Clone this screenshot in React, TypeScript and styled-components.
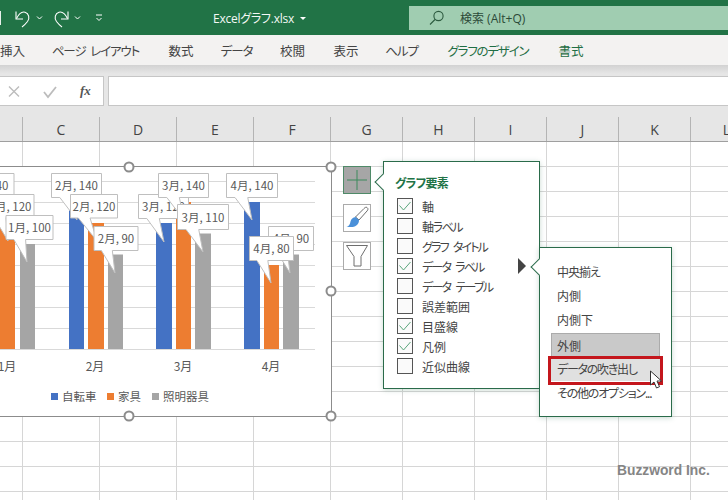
import React from "react";
import styled, { createGlobalStyle } from "styled-components";

const JP = `"Noto Sans CJK JP", sans-serif`;
const GREEN = "#217346";

const Global = createGlobalStyle`
  html, body { margin: 0; padding: 0; background: #fff; }
  body { width: 728px; height: 500px; overflow: hidden; font-family: ${JP}; font-feature-settings: "palt"; }
  #root { width: 728px; height: 500px; }
`;

const Page = styled.div`
  width: 728px; height: 500px; display: flex; flex-direction: column; overflow: hidden; background: #fff;
`;
const TitleBar = styled.header`
  height: 35px; flex: none; background: ${GREEN}; display: flex; align-items: center; position: relative; color: #fff;
`;
const QuickIcons = styled.svg`
  width: 110px; height: 35px; flex: none;
`;
const FileName = styled.div`
  margin-left: 103px; width: 196px; flex: none; display: flex; align-items: center; gap: 6px; font-size: 12px; letter-spacing: -0.25px;
  font-family: "Open Sans", ${JP}; color: #f4f8f5;
`;
const Caret = styled.span`
  width: 0; height: 0; border-left: 3px solid transparent; border-right: 3px solid transparent; border-top: 3px solid #fff; margin-top: 2px;
`;
const SearchBox = styled.div`
  width: 319px; height: 24px; flex: none; box-sizing: border-box; background: #a0cdb1; display: flex; align-items: center; padding-left: 20px; gap: 15px;
  font-size: 12px; font-family: "Open Sans", ${JP}; color: #2c4a38;
`;
const TabBar = styled.nav`
  height: 30px; flex: none; background: #f3f2f1; display: flex; align-items: center;
`;
const Tab = styled.div<{ $w: number; $track: number; $accent?: boolean }>`
  width: ${(p) => p.$w}px; flex: none; text-align: center; font-size: 12.5px; white-space: nowrap;
  letter-spacing: ${(p) => p.$track}px; word-spacing: 3px;
  color: ${(p) => (p.$accent ? "#1f6e44" : "#444")};
`;
const RibbonShadow = styled.div`
  height: 11px; flex: none; background: linear-gradient(#d2d2d2, #e6e6e6 80%);
`;
const FormulaBar = styled.div`
  height: 30px; flex: none; background: #e6e6e6; display: flex; gap: 4px;
`;
const FormulaButtons = styled.div`
  width: 104px; flex: none; box-sizing: border-box; background: #fff; border: 1px solid #c6c6c6; border-left: 0; position: relative;
`;
const FormulaIcons = styled.svg`
  width: 103px; height: 28px; display: block;
`;
const FxText = styled.span`
  position: absolute; left: 80px; top: 6px; font: italic 700 13px "Liberation Serif", serif; color: #555;
`;
const FormulaInput = styled.div`
  flex: 1; background: #fff; border: 1px solid #c6c6c6; border-right: 0;
`;
const HeaderGap = styled.div`
  height: 11px; flex: none; background: #e6e6e6;
`;
const ColumnHeader = styled.div`
  height: 24px; flex: none; background: #e6e6e6; display: flex; border-bottom: 1px solid #9f9f9f; box-sizing: content-box;
`;
const ColumnLabel = styled.div<{ $w: number }>`
  width: ${(p) => p.$w}px; flex: none; box-sizing: border-box; border-right: 1px solid #b4b4b4;
  display: flex; align-items: center; justify-content: center;
  font: 14px "Open Sans", sans-serif; color: #444;
`;
const Sheet = styled.main`
  flex: 1; position: relative; display: flex;
  background-image: linear-gradient(transparent 24px, #d6d6d6 24px);
  background-size: 100% 25px;
`;
const SheetColumn = styled.div<{ $w: number }>`
  width: ${(p) => p.$w}px; flex: none; box-sizing: border-box; border-right: 1px solid #d6d6d6;
`;
const ChartFrame = styled.div`
  position: absolute; left: -21.5px; top: 24px; width: 351px; height: 249px; box-sizing: content-box;
  background: #fff; border: 1.5px solid #8c8c8c;
`;
const ChartSvg = styled.svg`
  display: block; width: 351px; height: 249px;
`;
const CalloutLabel = styled.text`
  font-size: 11.5px; fill: #595959; font-family: ${JP}; font-feature-settings: "palt";
`;
const AxisLabel = styled.text`
  font-size: 12px; fill: #595959; font-family: ${JP}; font-feature-settings: "palt";
`;
const LegendLabel = styled.text`
  font-size: 11.5px; fill: #595959; font-family: ${JP};
`;
const Handle = styled.span<{ $x: number; $y: number }>`
  position: absolute; left: ${(p) => p.$x}px; top: ${(p) => p.$y}px; width: 11px; height: 11px; box-sizing: border-box;
  border-radius: 50%; background: #fff; border: 2px solid #8c8c8c; transform: translate(-50%, -50%);
`;
const ToolButton = styled.button<{ $y: number; $active?: boolean }>`
  position: absolute; left: 343px; top: ${(p) => p.$y}px; width: 28px; height: 28px; padding: 0; box-sizing: border-box;
  display: flex; align-items: center; justify-content: center;
  background: ${(p) => (p.$active ? "#a6a6a6" : "#fff")};
  border: 1px solid ${(p) => (p.$active ? "#4f8a68" : "#ababab")};
`;
const Panel = styled.section`
  position: absolute; box-sizing: border-box; background: #fff; border: 1px solid #2a6b4a;
  box-shadow: 0 1px 5px rgba(60, 120, 90, 0.28);
  &::before {
    content: ""; position: absolute; width: 12px; height: 12px; box-sizing: border-box; background: #fff;
    border-left: 1px solid #2a6b4a; border-bottom: 1px solid #2a6b4a; transform: rotate(45deg);
  }
`;
const ElementsPanel = styled(Panel)`
  left: 383px; top: 19px; width: 157px; height: 228px; padding: 11px 0 0 11px;
  &::before { left: -7px; top: 14px; }
`;
const PanelTitle = styled.h3`
  margin: 0 0 3px; height: 20px; line-height: 20px; font-size: 12px; font-weight: 700; color: ${GREEN}; letter-spacing: -0.8px;
`;
const CheckRow = styled.label<{ $track: number }>`
  display: flex; align-items: center; height: 20px; gap: 9px; padding-left: 2px; font-size: 12px; color: #444;
  letter-spacing: ${(p) => p.$track}px; word-spacing: 4px;
`;
const CheckBox = styled.span`
  width: 16px; height: 16px; flex: none; box-sizing: border-box; border: 1px solid #555; background: #fafafa;
  display: flex; align-items: center; justify-content: center;
`;
const SubArrow = styled.span`
  position: absolute; left: 518px; top: 116px; width: 0; height: 0;
  border-top: 8px solid transparent; border-bottom: 8px solid transparent; border-left: 8px solid #444;
`;
const OptionsPanel = styled(Panel)`
  left: 539px; top: 105px; width: 133px; height: 170px; padding: 12px 0 0 11px;
  &::before { left: -7px; top: 13px; }
`;
const OptionRow = styled.div<{ $state?: "selected" | "hover"; $track?: number }>`
  position: relative; width: 109px; height: 24.2px; box-sizing: border-box; padding-left: 6px; font-size: 12px; line-height: 24px; color: #444; white-space: nowrap;
  letter-spacing: ${(p) => p.$track ?? 0}px;
  background: ${(p) => (p.$state === "selected" ? "#c9c9c9" : p.$state === "hover" ? "#e0e0e0" : "transparent")};
  ${(p) => p.$state === "selected" && "border: 1px solid #ababab; border-bottom: 0; padding-left: 5px; line-height: 24px;"}
  ${(p) =>
    p.$state === "hover" &&
    `&::after { content: ""; position: absolute; left: -3px; right: -3px; top: -1px; bottom: -4px; border: 3px solid #c4161c; }`}
`;
const Cursor = styled.svg`
  position: absolute; left: 649px; top: 228px; width: 15px; height: 20px;
`;
const Watermark = styled.div`
  position: absolute; left: 617px; top: 321px; font: 700 13.8px "Liberation Sans", sans-serif; color: #858585;
`;

const columns: [string, number][] = [
  ["", 23], ["C", 77], ["D", 77], ["E", 77], ["F", 77], ["G", 72], ["H", 72], ["I", 72], ["J", 72], ["K", 72], ["L", 72],
];
// label, cell width, letter spacing, accent
const tabs: [string, number, number, boolean?][] = [
  ["挿入", 24, 0], ["ページ レイアウト", 143, -1.1], ["数式", 28, 0], ["データ", 83, -1], ["校閲", 29, 0], ["表示", 78, 0],
  ["ヘルプ", 33, -1], ["グラフのデザイン", 140, -1.2, true], ["書式", 26, 0, true],
];
const checks: [string, boolean, number][] = [
  ["軸", true, 0], ["軸ラベル", false, -1.4], ["グラフ タイトル", false, -1.8], ["データ ラベル", true, -1.8], ["データ テーブル", false, -1.7],
  ["誤差範囲", false, 0], ["目盛線", true, 0], ["凡例", true, 0], ["近似曲線", false, 0],
];
const BLUE = "#4472c4", ORANGE = "#ed7d31", GRAY = "#a5a5a5";
const bars: [number, number, number, string][] = [
  [-1, 15, 120, ORANGE], [20, 35, 100, GRAY],
  [69, 84, 140, BLUE], [88, 104, 120, ORANGE], [108, 123, 90, GRAY],
  [156, 172, 120, BLUE], [176, 191, 140, ORANGE], [195, 211, 110, GRAY],
  [244, 260, 140, BLUE], [264, 279, 80, ORANGE], [283, 299, 90, GRAY],
];
// text, x, y, w, h, tip x, tip y
const callouts: [string, number, number, number, number, number, number][] = [
  ["1月, 140", -40, 173.5, 54, 24, -14, 220],
  ["1月, 120", -14, 194.5, 48, 23, 8, 241],
  ["1月, 100", 6, 215.5, 47, 24, 27, 262],
  ["2月, 140", 51.5, 173.5, 50, 24, 77, 220],
  ["2月, 120", 70.5, 194.5, 47, 23.5, 97, 241],
  ["2月, 90", 94, 226.5, 44, 24, 115, 273],
  ["3月, 120", 138.5, 194.5, 50, 24, 164, 242],
  ["3月, 140", 158.5, 173.5, 50, 24, 184, 220],
  ["3月, 110", 177.5, 204.5, 51, 25, 203, 252],
  ["4月, 140", 226.5, 173.5, 51, 24, 252, 220],
  ["4月, 90", 268.5, 226.5, 45, 24, 290, 273],
  ["4月, 80", 249.5, 236.5, 44, 24, 271, 283],
];
const legend: [number, string, number, string][] = [
  [51, BLUE, 62, "自転車"], [107, ORANGE, 118, "家具"], [152, GRAY, 163, "照明器具"],
];

function Callout({ c }: { c: (typeof callouts)[number] }) {
  const [t, x, y, w, h, tx, ty] = c;
  const b = y + h;
  return (
    <g>
      <path
        d={`M${x} ${y}H${x + w}V${b}H${x + (w * 5) / 12}L${tx} ${ty}L${x + w / 6} ${b}H${x}Z`}
        fill="#fff"
        stroke="#bfbfbf"
      />
      <CalloutLabel x={x + w / 2} y={y + h / 2 + 4.5} textAnchor="middle">{t}</CalloutLabel>
    </g>
  );
}

export default function App() {
  return (
    <Page>
      <Global />
      <TitleBar>
        <QuickIcons viewBox="0 0 110 35" fill="none" stroke="#fff">
          <rect x="-2" y="11" width="3" height="14" fill="#e8f0eb" stroke="none" />
          <path d="M16 11.5V19H23" strokeWidth="1.1" />
          <path d="M16.5 18.5C19 13.5 22.5 11.5 25 12.2C29 13.5 30 18 27.5 21.5C26 23.5 24 25.5 22 27" strokeWidth="1.1" />
          <path d="M37 16.5l2.5 2.5 2.5-2.5" strokeWidth="1" />
          <path d="M68 11.5V19H61" strokeWidth="1.1" />
          <path d="M67.5 18.5C65 13.5 61.5 11.5 59 12.2C55 13.5 54 18 56.5 21.5C58 23.5 60 25.5 62 27" strokeWidth="1.1" />
          <path d="M75 16.5l2.5 2.5 2.5-2.5" strokeWidth="1" />
          <path d="M96 15h6" strokeWidth="1" />
          <path d="M96.5 18l2.5 2.5 2.5-2.5" strokeWidth="1" />
        </QuickIcons>
        <FileName>Excelグラフ.xlsx <Caret /></FileName>
        <SearchBox>
          <svg width="16" height="16" viewBox="0 0 16 16" fill="none" stroke="#2c5a3f" strokeWidth="1.1">
            <circle cx="9.5" cy="6" r="4.6" />
            <path d="M6 9.5L1 14.5" />
          </svg>
          検索 (Alt+Q)
        </SearchBox>
      </TitleBar>
      <TabBar>
        {tabs.map(([t, w, track, accent]) => (
          <Tab key={t} $w={w} $track={track} $accent={accent}>{t}</Tab>
        ))}
      </TabBar>
      <RibbonShadow />
      <FormulaBar>
        <FormulaButtons>
          <FormulaIcons viewBox="0 0 103 28" fill="none">
            <path d="M9 9.5l10 10M19 9.5l-10 10" stroke="#bcbcbc" strokeWidth="1.4" />
            <path d="M44 15l4 5 8-10" stroke="#bcbcbc" strokeWidth="1.8" />
          </FormulaIcons>
          <FxText>fx</FxText>
        </FormulaButtons>
        <FormulaInput />
      </FormulaBar>
      <HeaderGap />
      <ColumnHeader>
        {columns.map(([l, w], i) => (
          <ColumnLabel key={i} $w={w}>{l}</ColumnLabel>
        ))}
      </ColumnHeader>
      <Sheet>
        {columns.map(([, w], i) => (
          <SheetColumn key={i} $w={w} />
        ))}
        <ChartFrame>
          <ChartSvg viewBox="-20 167 351 249">
            {[181, 202, 223, 244, 265, 286, 307, 328, 349].map((y) => (
              <path key={y} d={`M-20 ${y + 0.5}H315`} stroke="#d9d9d9" />
            ))}
            {bars.map(([a, b, v, c], i) => (
              <rect key={i} x={a} y={349 - v * 1.05} width={b - a} height={v * 1.05} fill={c} />
            ))}
            {callouts.map((c) => (
              <Callout key={c[0]} c={c} />
            ))}
            {[["1月", 7], ["2月", 95], ["3月", 183], ["4月", 271]].map(([t, x]) => (
              <AxisLabel key={t as string} x={x as number} y={371} textAnchor="middle">{t}</AxisLabel>
            ))}
            {legend.map(([x, c, tx, t]) => (
              <g key={t}>
                <rect x={x} y={393} width={7} height={7} fill={c} />
                <LegendLabel x={tx} y={400.5}>{t}</LegendLabel>
              </g>
            ))}
          </ChartSvg>
          <Handle $x={149.5} $y={0} />
          <Handle $x={351} $y={0} />
          <Handle $x={351} $y={124} />
          <Handle $x={351} $y={249} />
          <Handle $x={149.5} $y={249} />
        </ChartFrame>
        <ToolButton $y={24} $active>
          <svg width="24" height="24" viewBox="0 0 24 24" stroke="#3c8a5c" strokeWidth="1">
            <path d="M12 2V22M2 12H22" />
          </svg>
        </ToolButton>
        <ToolButton $y={62}>
          <svg width="26" height="26" viewBox="0 0 26 26">
            <path d="M23 2.5C24.5 3.5 24 5 23 6L15 15L11.5 12L20 3.5C21 2.5 22 1.8 23 2.5Z" fill="#fff" stroke="#6e6e6e" />
            <path d="M11.5 12L15 15C15 19 12.5 21.5 8.5 22H2.5C5 21 6 19.5 6.5 16.5C7 14 9 12.5 11.5 12Z" fill="#4a90d9" />
          </svg>
        </ToolButton>
        <ToolButton $y={100}>
          <svg width="26" height="26" viewBox="0 0 26 26" fill="#fff" stroke="#6e6e6e">
            <path d="M2.5 2.5H23.5L17 13.5V23H10V13.5Z" />
          </svg>
        </ToolButton>
        <ElementsPanel>
          <PanelTitle>グラフ要素</PanelTitle>
          {checks.map(([t, on, track]) => (
            <CheckRow key={t} $track={track}>
              <CheckBox>
                {on && (
                  <svg width="14" height="14" viewBox="0 0 14 14" fill="none" stroke="#5aa67c" strokeWidth="1">
                    <path d="M1.5 6.5L5.5 11L12.5 3" />
                  </svg>
                )}
              </CheckBox>
              {t}
            </CheckRow>
          ))}
        </ElementsPanel>
        <SubArrow />
        <OptionsPanel>
          <OptionRow $track={-1}>中央揃え</OptionRow>
          <OptionRow>内側</OptionRow>
          <OptionRow>内側下</OptionRow>
          <OptionRow $state="selected">外側</OptionRow>
          <OptionRow $state="hover" $track={-1.25}>データの吹き出し</OptionRow>
          <OptionRow $track={-1.2}>その他のオプション...</OptionRow>
        </OptionsPanel>
        <Cursor viewBox="0 0 15 20">
          <path d="M1.5 1V15L5 12L7.5 18L10.5 16.7L8 11H12.5Z" fill="#fff" stroke="#333" strokeWidth="1" />
        </Cursor>
        <Watermark>Buzzword Inc.</Watermark>
      </Sheet>
    </Page>
  );
}
